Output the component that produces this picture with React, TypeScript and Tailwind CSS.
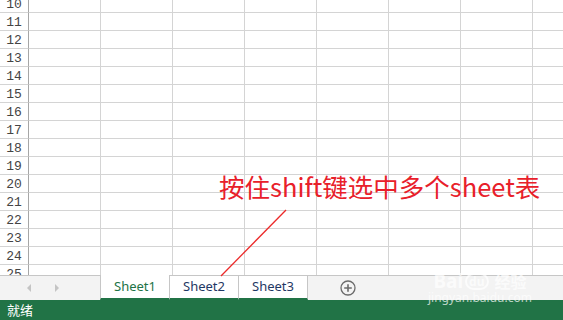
import React from "react";

const rows = Array.from({ length: 16 }, (_, i) => i + 10);
const cols = Array.from({ length: 8 }, (_, i) => i);

const Grid = () => (
  <div className="h-[275px] overflow-hidden">
    <div className="-mt-[5px] flex flex-col">
      {rows.map((r) => (
        <div key={r} className="flex h-[18px] shrink-0">
          <div
            className="w-[29px] shrink-0 overflow-hidden border-b border-r border-b-[#d4d4d4] border-r-[#a6a6a6] text-center text-[13px] leading-[19px] text-[#444]"
            style={{ fontFamily: '"Liberation Mono", monospace' }}
          >
            {r}
          </div>
          {cols.map((c) => (
            <div
              key={c}
              className="w-[72px] shrink-0 border-b border-r border-[#d4d4d4] bg-white"
            />
          ))}
        </div>
      ))}
    </div>
  </div>
);

const PlusCircle = () => (
  <svg width="16" height="16" viewBox="0 0 16 16">
    <circle cx="8" cy="8" r="7" fill="none" stroke="#6b6b6b" strokeWidth="1.3" />
    <path d="M8 4.2v7.6M4.2 8h7.6" stroke="#6b6b6b" strokeWidth="1.6" />
  </svg>
);

const TabBar = () => (
  <div
    className="flex h-[25px] border-t border-[#c6c6c6] bg-[#f3f3f3]"
    style={{ fontFamily: '"Noto Sans", "Open Sans", sans-serif' }}
  >
    <div className="flex w-[100px] shrink-0 items-center">
      <svg width="6" height="10" viewBox="0 0 6 10" className="ml-[26px]">
        <path d="M5 1L1 5l4 4z" fill="#c4c4c4" />
      </svg>
      <svg width="6" height="10" viewBox="0 0 6 10" className="ml-[22px]">
        <path d="M1 1l4 4-4 4z" fill="#c4c4c4" />
      </svg>
    </div>
    <div className="-mt-px flex h-[25px] w-[70px] shrink-0 items-center justify-center border-x border-b-2 border-x-[#c6c6c6] border-b-[#217346] bg-white text-[13px] text-[#217346]">
      Sheet1
    </div>
    <div className="flex h-[24px] w-[69px] shrink-0 items-center justify-center border-r border-b-2 border-r-[#c6c6c6] border-b-[#217346] bg-white text-[13px] text-[#1f3864]">
      Sheet2
    </div>
    <div className="flex h-[24px] w-[69px] shrink-0 items-center justify-center border-r border-b-2 border-r-[#c6c6c6] border-b-[#217346] bg-white text-[13px] text-[#1f3864]">
      Sheet3
    </div>
    <div className="ml-[32px] flex items-center">
      <PlusCircle />
    </div>
  </div>
);

const StatusBar = () => (
  <div
    className="flex h-[20px] items-center bg-[#217346] pl-[7px] text-[13px] text-white"
    style={{ fontFamily: '"Noto Sans CJK SC", sans-serif' }}
  >
    就绪
  </div>
);

export default function App() {
  return (
    <div className="relative h-[320px] w-[563px] overflow-hidden bg-white">
      <Grid />
      <TabBar />
      <StatusBar />

      <div
        className="absolute left-[219px] top-[173px] whitespace-nowrap text-[25.5px] leading-none text-[#e8202a]"
        style={{ fontFamily: '"Noto Sans CJK SC", sans-serif' }}
      >
        按住shift键选中多个sheet表
      </div>
      <svg className="pointer-events-none absolute left-0 top-0" width="563" height="320">
        <line x1="286" y1="210" x2="221" y2="276" stroke="#ec2a2a" strokeWidth="1.3" />
      </svg>

      <div
        className="pointer-events-none absolute left-[428px] top-[271px] flex flex-col items-center text-white/70"
        style={{ fontFamily: '"Noto Sans", "Noto Sans CJK SC", sans-serif' }}
      >
        <div className="flex items-center text-[19px] font-bold leading-[20px]">
          <span>Bai</span>
          <span className="ml-[2px] rounded-full border-2 border-white/70 px-[2px] text-[12px] leading-[13px]">du</span>
          <span className="ml-[6px] text-[16px]" style={{ fontFamily: '"Noto Sans CJK SC", sans-serif' }}>经验</span>
        </div>
        <div className="text-[12px] leading-[13px]">jingyan.baidu.com</div>
      </div>
    </div>
  );
}
